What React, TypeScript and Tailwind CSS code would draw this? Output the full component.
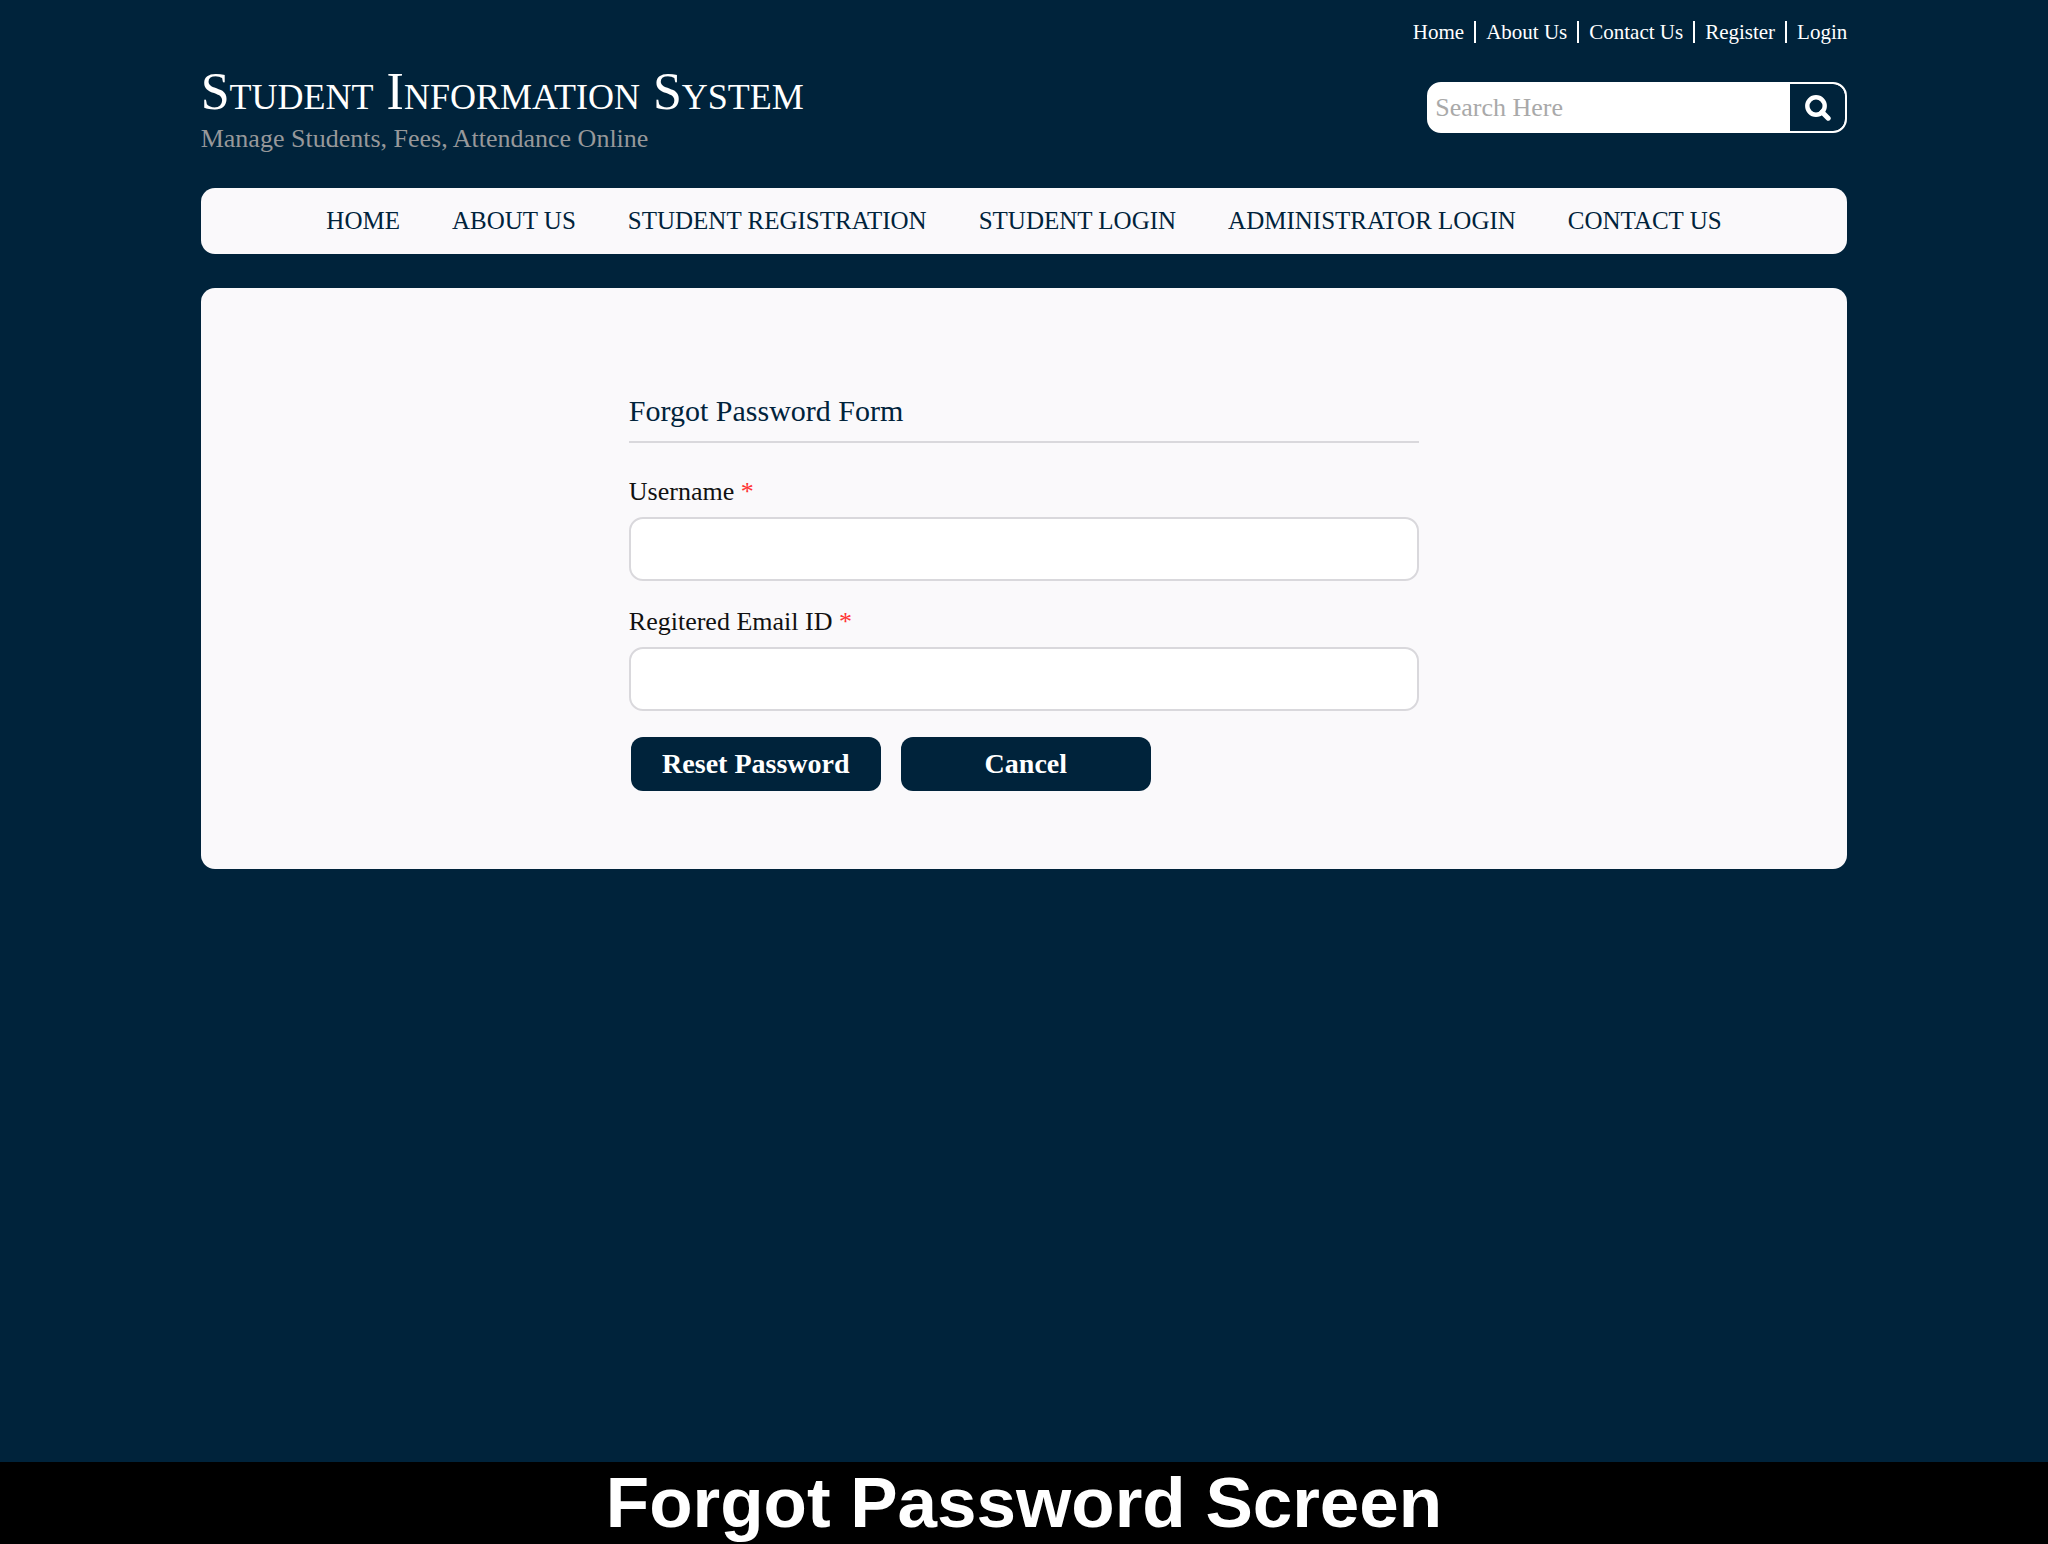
const topLinks = ["Home", "About Us", "Contact Us", "Register", "Login"];

const menuItems = [
  "Home",
  "About Us",
  "Student Registration",
  "Student Login",
  "Administrator Login",
  "Contact Us",
];

function SearchIcon() {
  return (
    <svg viewBox="0 0 26 26" className="h-[26px] w-[26px]" fill="none" stroke="currentColor" aria-hidden="true">
      <circle cx="11" cy="11" r="8.7" strokeWidth="4.4" />
      <path d="M17 17l6.2 6.2" strokeWidth="5" strokeLinecap="round" />
    </svg>
  );
}

function Header() {
  return (
    <header className="flex items-start justify-between">
      <div className="pt-[62px]">
        <h1 className="text-[52px] leading-[60px] text-white [font-variant:small-caps]">
          Student Information System
        </h1>
        <p className="text-[26px] leading-[34px] text-[#97989a]">
          Manage Students, Fees, Attendance Online
        </p>
      </div>

      <div className="flex flex-col items-end pt-[21px]">
        <ul className="flex text-[21px] leading-[22px] text-white">
          {topLinks.map((link) => (
            <li
              key={link}
              className="border-r-2 border-white px-2.5 last:border-r-0 last:pr-0"
            >
              <a href="#">{link}</a>
            </li>
          ))}
        </ul>
        <form
          className="mt-[39px] flex h-[51px] w-[420px] overflow-hidden rounded-[14px] border-2 border-white bg-white"
          onSubmit={(e) => e.preventDefault()}
        >
          <input
            type="text"
            aria-label="Search"
            placeholder="Search Here"
            className="min-w-0 flex-1 px-1.5 text-[26px] outline-none placeholder:text-[#a9a9a9]"
          />
          <button
            type="submit"
            aria-label="Submit search"
            className="flex w-[55px] items-center justify-center rounded-r-xl bg-[#00233b] text-white"
          >
            <SearchIcon />
          </button>
        </form>
      </div>
    </header>
  );
}

function MainMenu() {
  return (
    <nav className="mt-8 rounded-[14px] bg-[#faf9fb]">
      <ul className="flex h-[66px] items-center justify-center gap-13 text-[25px] whitespace-nowrap text-[#00233b] uppercase">
        {menuItems.map((item) => (
          <li key={item}>
            <a href="#">{item}</a>
          </li>
        ))}
      </ul>
    </nav>
  );
}

interface FieldProps {
  id: string;
  label: string;
  type: string;
}

function Field({ id, label, type }: FieldProps) {
  return (
    <div className="mb-5">
      <label htmlFor={id} className="block pb-1 text-[26px] leading-[42px] text-[#111]">
        {label} <span className="text-[#f33]">*</span>
      </label>
      <input
        id={id}
        type={type}
        className="block h-16 w-full rounded-[14px] border-2 border-[#d9d8dc] bg-white px-3 text-[26px] outline-none"
      />
    </div>
  );
}

function ForgotPasswordForm() {
  return (
    <main className="mt-[34px] rounded-[14px] bg-[#faf9fb] pt-[105px] pb-[78px]">
      <form className="mx-auto w-[48%]" onSubmit={(e) => e.preventDefault()}>
        <h2 className="mb-7 border-b-2 border-[#d9d8dc] pb-3 text-[30px] leading-9 text-[#00233b]">
          Forgot Password Form
        </h2>
        <Field id="username" label="Username" type="text" />
        <Field id="email" label="Regitered Email ID" type="email" />
        <div className="flex gap-5 px-0.5 pt-1.5 text-[28px] font-bold text-white">
          <button type="submit" className="h-[54px] w-[250px] rounded-xl bg-[#00233b]">
            Reset Password
          </button>
          <button type="button" className="h-[54px] w-[250px] rounded-xl bg-[#00233b]">
            Cancel
          </button>
        </div>
      </form>
    </main>
  );
}

export default function App() {
  return (
    <div className="flex min-h-screen flex-col bg-[#00233b] font-['Liberation_Serif',serif]">
      <div className="mx-auto w-[80.4%] flex-1">
        <Header />
        <MainMenu />
        <ForgotPasswordForm />
      </div>
      <footer className="bg-black text-center font-['Liberation_Sans',sans-serif] text-[71px] leading-[82px] font-bold text-white">
        Forgot Password Screen
      </footer>
    </div>
  );
}
